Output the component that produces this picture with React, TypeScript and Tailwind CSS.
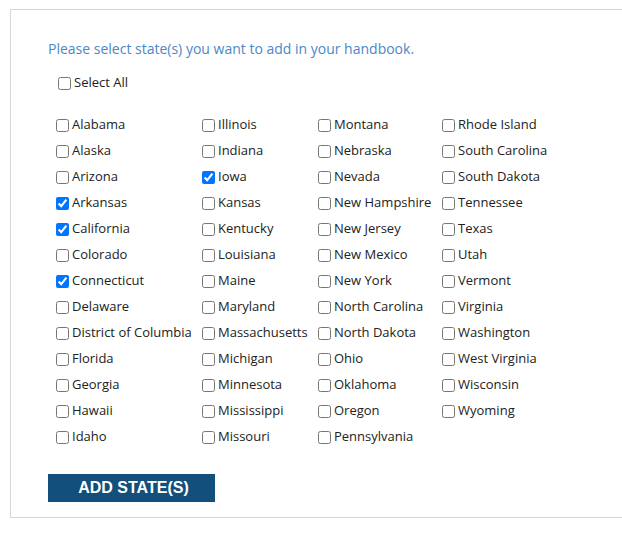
import React from "react";

const columns: string[][] = [
  ["Alabama", "Alaska", "Arizona", "Arkansas", "California", "Colorado", "Connecticut", "Delaware", "District of Columbia", "Florida", "Georgia", "Hawaii", "Idaho"],
  ["Illinois", "Indiana", "Iowa", "Kansas", "Kentucky", "Louisiana", "Maine", "Maryland", "Massachusetts", "Michigan", "Minnesota", "Mississippi", "Missouri"],
  ["Montana", "Nebraska", "Nevada", "New Hampshire", "New Jersey", "New Mexico", "New York", "North Carolina", "North Dakota", "Ohio", "Oklahoma", "Oregon", "Pennsylvania"],
  ["Rhode Island", "South Carolina", "South Dakota", "Tennessee", "Texas", "Utah", "Vermont", "Virginia", "Washington", "West Virginia", "Wisconsin", "Wyoming"],
];

const checked = new Set(["Arkansas", "California", "Connecticut", "Iowa"]);

function Item({ name }: { name: string }) {
  return (
    <label className="flex h-[26px] items-center whitespace-nowrap">
      <input
        type="checkbox"
        defaultChecked={checked.has(name)}
        className="m-0 mr-[3px] h-[13px] w-[13px] shrink-0"
      />
      <span>{name}</span>
    </label>
  );
}

export default function App() {
  const colWidths = ["w-[146px]", "w-[116px]", "w-[124px]", "w-[140px]"];
  return (
    <div
      className="min-h-[538px] w-[622px] overflow-hidden bg-white pl-[10px] pt-[9px] text-[13px] text-[#222]"
      style={{ fontFamily: '"Open Sans", "Noto Sans", sans-serif' }}
    >
      <div className="w-[620px] border border-r-0 border-[#d6d6d6] pb-[15px] pt-[29px]">
        <div className="pl-[37px] text-[14px] leading-[19px] text-[#4a88c7]">
          Please select state(s) you want to add in your handbook.
        </div>
        <div className="mt-[12px] pl-[47px]">
          <Item name="Select All" />
        </div>
        <div className="mt-[16px] flex pl-[45px]">
          {columns.map((col, i) => (
            <div key={i} className={`flex flex-col ${colWidths[i]}`}>
              {col.map((n) => (
                <Item key={n} name={n} />
              ))}
            </div>
          ))}
        </div>
        <div className="mt-[24px] pl-[37px]">
          <button
            className="flex h-[28px] w-[167px] items-center justify-center bg-[#124f7b] pl-[4px] text-[16px] font-bold text-white"
            style={{ fontFamily: '"Liberation Sans", Arial, sans-serif' }}
          >
            ADD STATE(S)
          </button>
        </div>
      </div>
    </div>
  );
}
